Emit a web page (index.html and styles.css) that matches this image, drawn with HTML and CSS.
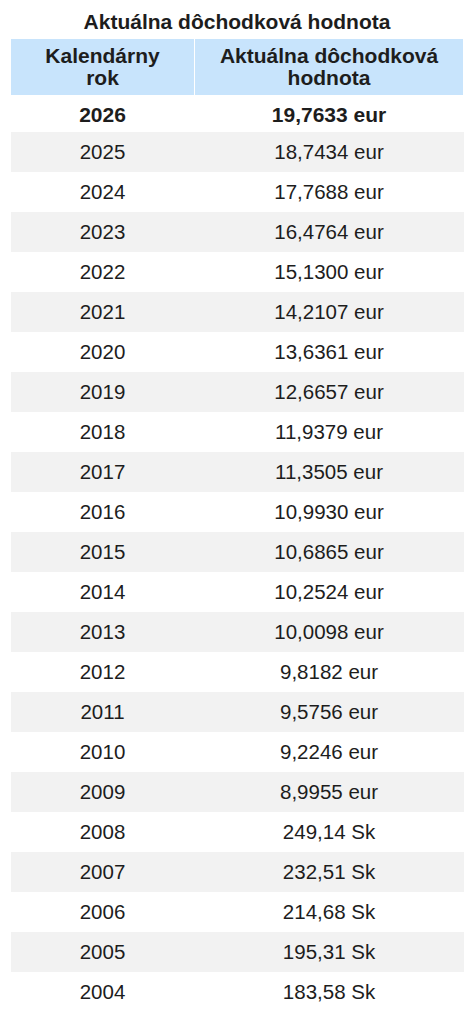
FILE: index.html
```html
<!DOCTYPE html>
<html lang="sk">
<head>
    <meta charset="UTF-8">
    <meta name="viewport" content="width=device-width, initial-scale=1.0">
    <title>Aktuálna dôchodková hodnota</title>
    <link rel="stylesheet" href="styles.css">
</head>
<body>
    <div class="wrap">
        <h2 class="title">Aktuálna dôchodková hodnota</h2>
        <table class="adh-table">
            <thead>
                <tr>
                    <th class="col-year">Kalendárny<br>rok</th>
                    <th class="col-value">Aktuálna dôchodková<br>hodnota</th>
                </tr>
            </thead>
            <tbody>
                <tr class="current"><td>2026</td><td>19,7633 eur</td></tr>
                <tr><td>2025</td><td>18,7434 eur</td></tr>
                <tr><td>2024</td><td>17,7688 eur</td></tr>
                <tr><td>2023</td><td>16,4764 eur</td></tr>
                <tr><td>2022</td><td>15,1300 eur</td></tr>
                <tr><td>2021</td><td>14,2107 eur</td></tr>
                <tr><td>2020</td><td>13,6361 eur</td></tr>
                <tr><td>2019</td><td>12,6657 eur</td></tr>
                <tr><td>2018</td><td>11,9379 eur</td></tr>
                <tr><td>2017</td><td>11,3505 eur</td></tr>
                <tr><td>2016</td><td>10,9930 eur</td></tr>
                <tr><td>2015</td><td>10,6865 eur</td></tr>
                <tr><td>2014</td><td>10,2524 eur</td></tr>
                <tr><td>2013</td><td>10,0098 eur</td></tr>
                <tr><td>2012</td><td>9,8182 eur</td></tr>
                <tr><td>2011</td><td>9,5756 eur</td></tr>
                <tr><td>2010</td><td>9,2246 eur</td></tr>
                <tr><td>2009</td><td>8,9955 eur</td></tr>
                <tr><td>2008</td><td>249,14 Sk</td></tr>
                <tr><td>2007</td><td>232,51 Sk</td></tr>
                <tr><td>2006</td><td>214,68 Sk</td></tr>
                <tr><td>2005</td><td>195,31 Sk</td></tr>
                <tr><td>2004</td><td>183,58 Sk</td></tr>
            </tbody>
        </table>
    </div>
</body>
</html>
```

FILE: styles.css
```css
* {
    margin: 0;
    padding: 0;
    box-sizing: border-box;
    font-family: "Liberation Sans", Arial, sans-serif;
}

body {
    background-color: #fff;
    color: #1d1d1d;
}

.wrap {
    width: 454px;
    margin-left: 10px;
}

.title {
    font-size: 21px;
    font-weight: bold;
    line-height: 24px;
    text-align: center;
    padding: 10px 0 4px;
}

.adh-table {
    width: 100%;
    border-collapse: collapse;
    table-layout: fixed;
}

.adh-table th {
    background-color: #c8e4fc;
    border: 1px solid #fff;
    font-size: 21px;
    font-weight: bold;
    line-height: 22px;
    padding: 6px 0;
    text-align: center;
}

.col-year {
    width: 184px;
}

.adh-table td {
    height: 40px;
    font-size: 20.5px;
    text-align: center;
    vertical-align: middle;
}

/* current year row */
.adh-table tr.current td {
    height: 36px;
    padding-top: 2px;
    font-size: 21px;
    font-weight: bold;
}

.adh-table tbody tr:nth-child(even) {
    background-color: #f2f2f2;
}
```
